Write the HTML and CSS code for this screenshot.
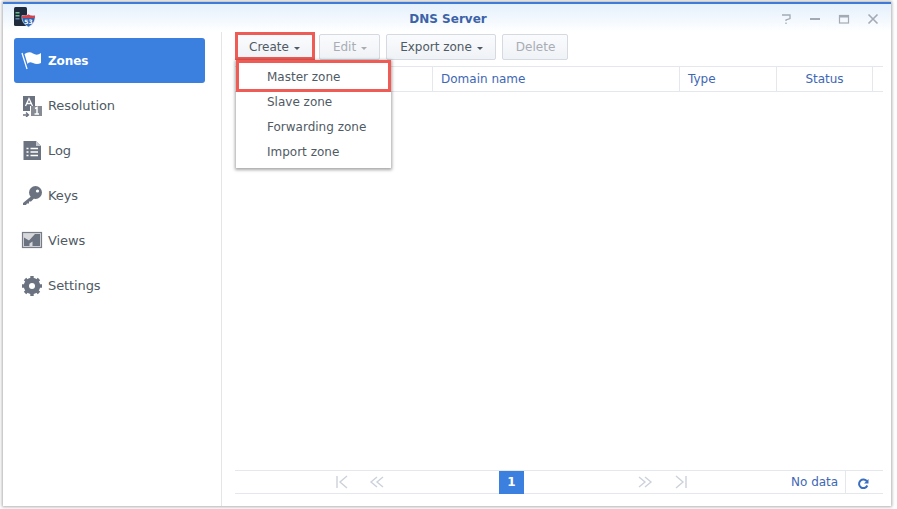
FILE: index.html
```html
<!DOCTYPE html>
<html lang="en">
<head>
<meta charset="utf-8">
<title>DNS Server</title>
<link rel="stylesheet" href="styles.css">
</head>
<body>
<div class="window">
  <header class="titlebar">
    <svg class="app-icon" width="26" height="24" viewBox="0 0 26 24">
      <rect x="1" y="1" width="13" height="19" rx="1.500" fill="#1f2a3c"/>
      <rect x="2.500" y="6" width="4" height="1.500" fill="#6fb98f"/>
      <rect x="2.500" y="9" width="4" height="1.500" fill="#6fb98f"/>
      <rect x="2.500" y="12" width="4" height="1.500" fill="#5f7fa8"/>
      <path d="M9 9.500Q13 10.500 15.500 8.500Q18 10.500 22 9.500Q23 17 15.500 21Q8 17 9 9.500Z" fill="#2f66b2" stroke="#dfe6f0" stroke-width="0.700"/>
      <path d="M9.200 9.500Q13 10.500 15.500 8.500Q18 10.500 21.800 9.500L21.800 12H9.200Z" fill="#d8424a"/>
      <text x="15.500" y="18" class="shield-text" text-anchor="middle">53</text>
    </svg>
    <h1 class="title">DNS Server</h1>
    <div class="win-controls">
      <svg width="12" height="12" viewBox="0 0 12 12"><path d="M2 2H10V5.500L6 7V8M6 9.500V11" fill="none" stroke="#a3aab4" stroke-width="1.300"/></svg>
      <svg width="12" height="12" viewBox="0 0 12 12"><path d="M1 6H11" stroke="#a3aab4" stroke-width="2"/></svg>
      <svg width="12" height="12" viewBox="0 0 12 12"><rect x="1.500" y="2.500" width="9" height="7.500" fill="none" stroke="#a3aab4" stroke-width="1.200"/><rect x="1" y="2" width="10" height="2.500" fill="#a3aab4"/></svg>
      <svg width="12" height="12" viewBox="0 0 12 12"><path d="M1.500 1.500L10.500 10.500M10.500 1.500L1.500 10.500" stroke="#a3aab4" stroke-width="1.600"/></svg>
    </div>
  </header>
  <div class="body">
    <nav class="sidebar">
      <a class="nav-item active">
        <svg class="nav-icon" width="22" height="22" viewBox="0 0 22 22"><path d="M1 3L6 19" stroke="#fff" stroke-width="1.300"/><path d="M3.500 4Q8 1 12 3.500T20 3V13Q16 15 12 13T6.500 14Z" fill="#fff"/></svg>
        <span>Zones</span>
      </a>
      <a class="nav-item">
        <svg class="nav-icon" width="22" height="22" viewBox="0 0 22 22"><path d="M2 1H14V11H9V16H2Z" fill="#6b7280"/><path d="M4.500 11L8 3.500L11.500 11M5.500 8.500H10.500" fill="none" stroke="#fff" stroke-width="1.300"/><rect x="10" y="11" width="11" height="10" fill="#868b94"/><path d="M14 13.500L16 12.500V19M13.500 19H18" fill="none" stroke="#fff" stroke-width="1.500"/><path d="M2 20H7M5 17.500L7.500 20L5 22" fill="none" stroke="#6b7280" stroke-width="1.300"/></svg>
        <span>Resolution</span>
      </a>
      <a class="nav-item">
        <svg class="nav-icon" width="22" height="22" viewBox="0 0 22 22"><path d="M2.500 1H15L20 6V20H2.500Z" fill="#6b7280"/><path d="M15 1V6H20Z" fill="#c5c8cd"/><path d="M5.500 8.500H7.500M9.500 8.500H17M5.500 12H7.500M9.500 12H17M5.500 15.500H7.500M9.500 15.500H17" stroke="#fff" stroke-width="1.700"/></svg>
        <span>Log</span>
      </a>
      <a class="nav-item">
        <svg class="nav-icon" width="22" height="22" viewBox="0 0 22 22"><circle cx="14.500" cy="7.500" r="6.500" fill="#6b7280"/><circle cx="16.500" cy="6" r="1.600" fill="#fff"/><path d="M10.500 11L2 18V20H5L6 18.500H8V16.500H10L13 13.500Z" fill="#6b7280"/></svg>
        <span>Keys</span>
      </a>
      <a class="nav-item">
        <svg class="nav-icon" width="22" height="22" viewBox="0 0 22 22"><rect x="1.500" y="2.500" width="19" height="15" fill="#d6d8dc" stroke="#777d87" stroke-width="1.200"/><path d="M3 16V7.500L8 10.500L14 4H19V16H11.500V11.500L8.500 13.500V16Z" fill="#6b7280"/></svg>
        <span>Views</span>
      </a>
      <a class="nav-item">
        <svg class="nav-icon" width="22" height="22" viewBox="0 0 22 22"><circle cx="11" cy="11" r="6" fill="none" stroke="#6b7280" stroke-width="4.500"/><path d="M11 1V21M1 11H21M4 4L18 18M18 4L4 18" stroke="#6b7280" stroke-width="3.400"/><circle cx="11" cy="11" r="3" fill="#fff"/></svg>
        <span>Settings</span>
      </a>
    </nav>
    <main class="content">
      <div class="toolbar">
        <button class="btn">Create<i class="caret"></i></button>
        <button class="btn disabled">Edit<i class="caret"></i></button>
        <button class="btn">Export zone<i class="caret"></i></button>
        <button class="btn disabled">Delete</button>
      </div>
      <div class="table-head">
        <div class="col col-blank"></div>
        <div class="col col-domain">Domain name</div>
        <div class="col col-type">Type</div>
        <div class="col col-status">Status</div>
      </div>
      <div class="table-body"></div>
      <div class="pager">
        <div class="pager-nav">
          <svg width="14" height="14" viewBox="0 0 14 14"><path d="M2 1V13M12 1L5 7L12 13" fill="none" stroke="#ccd2da" stroke-width="1.400"/></svg>
          <svg width="16" height="14" viewBox="0 0 16 14"><path d="M8 2L2 7L8 12M14 2L8 7L14 12" fill="none" stroke="#ccd2da" stroke-width="1.400"/></svg>
        </div>
        <span class="page-current">1</span>
        <div class="pager-nav right">
          <svg width="16" height="14" viewBox="0 0 16 14"><path d="M2 2L8 7L2 12M8 2L14 7L8 12" fill="none" stroke="#ccd2da" stroke-width="1.400"/></svg>
          <svg width="14" height="14" viewBox="0 0 14 14"><path d="M12 1V13M2 1L9 7L2 13" fill="none" stroke="#ccd2da" stroke-width="1.400"/></svg>
        </div>
        <span class="no-data">No data</span>
        <span class="refresh">
          <svg width="12" height="12" viewBox="0 0 12 12"><path d="M10 3.500A4.300 4.300 0 1 0 10.300 7.500" fill="none" stroke="#3a6fc0" stroke-width="2"/><path d="M11.500 1V5.500H7Z" fill="#3a6fc0"/></svg>
        </span>
      </div>
      <div class="create-mark"></div>
      <div class="menu">
        <div class="menu-item first">Master zone</div>
        <div class="menu-item">Slave zone</div>
        <div class="menu-item">Forwarding zone</div>
        <div class="menu-item">Import zone</div>
      </div>
    </main>
  </div>
</div>
</body>
</html>
```
FILE: styles.css
```css
* { box-sizing: border-box; }
html, body { margin: 0; height: 100%; }
body {
  background: #fff;
  padding: 2px 6px 3px 3px;
  font-family: "DejaVu Sans", Verdana, sans-serif;
  font-size: 12px;
  color: #505a64;
  overflow: hidden;
}
.window {
  height: 100%;
  display: flex;
  flex-direction: column;
  background: #fff;
  border-top: 2px solid #3f7bd6;
  box-shadow: 0 0 3px 1px rgba(0,0,0,.32);
}
.titlebar {
  height: 28px;
  flex: none;
  display: flex;
  align-items: center;
  position: relative;
  padding: 2px 0 0 2px;
  background: linear-gradient(#e4f0fc, #ffffff);
}
.app-icon { position: absolute; left: 10px; top: 2px; }
.shield-text { font: bold 6px "DejaVu Sans", sans-serif; fill: #fff; }
.title {
  margin: 0;
  width: 100%;
  text-align: center;
  font-size: 12px;
  font-weight: bold;
  color: #3c62a8;
}
.win-controls {
  position: absolute;
  right: 12px;
  top: 9px;
  display: flex;
  gap: 17px;
}
.body { flex: 1; display: flex; min-height: 0; }
.sidebar {
  width: 219px;
  flex: none;
  padding: 6px 16px 0 11px;
  border-right: 1px solid #e2e5ea;
}
.nav-item {
  height: 45px;
  display: flex;
  align-items: center;
  gap: 5px;
  padding-left: 7px;
  font-size: 13px;
  letter-spacing: -0.1px;
  color: #505a64;
  border-radius: 3px;
}
.nav-item.active {
  background: #3b7fdf;
  color: #fff;
  font-size: 12px;
  font-weight: bold;
}
.content {
  flex: 1;
  min-width: 0;
  position: relative;
  display: flex;
  flex-direction: column;
  padding: 1px 8px 0 13px;
}
.toolbar { display: flex; gap: 6px; height: 33px; padding: 1px 0 0; }
.btn {
  height: 26px;
  padding: 0 12px 0 13px;
  font: 12px "DejaVu Sans", Verdana, sans-serif;
  color: #505a64;
  background: linear-gradient(#fafbfd, #eff2f6);
  border: 1px solid #d5dae1;
  border-radius: 2px;
  display: flex;
  align-items: center;
}
.btn.disabled { color: #a8adb5; }
.caret {
  display: inline-block;
  margin-left: 5px;
  margin-top: 2px;
  border: 3px solid transparent;
  border-top-color: currentColor;
  border-bottom: 0;
}
.table-head {
  height: 26px;
  flex: none;
  display: flex;
  border-top: 1px solid #e4e7ec;
  border-bottom: 1px solid #e4e7ec;
  color: #3e67b5;
}
.col {
  display: flex;
  align-items: center;
  padding-left: 8px;
  border-right: 1px solid #e4e7ec;
  margin: 0;
}
.col-blank { width: 198px; }
.col-domain { width: 247px; }
.col-type { width: 97px; }
.col-status { width: 96px; justify-content: center; padding-left: 0; }
.table-body { flex: 1; }
.pager {
  height: 24px;
  flex: none;
  margin-bottom: 12px;
  display: flex;
  align-items: center;
  border-top: 1px solid #e4e7ec;
  border-bottom: 1px solid #e4e7ec;
}
.pager-nav { display: flex; align-items: center; gap: 20px; margin-left: 100px; width: 164px; }
.pager-nav.right { margin-left: 113px; width: 120px; gap: 21px; }
.page-current {
  width: 25px;
  height: 23px;
  background: #3b7fdf;
  color: #fff;
  font-weight: bold;
  display: flex;
  align-items: center;
  justify-content: center;
}
.no-data { color: #3e67b5; padding-bottom: 1px; margin-left: 34px; }
.refresh {
  margin-left: 7px;
  padding: 3px 0 0 11px;
  height: 23px;
  display: flex;
  align-items: center;
  border-left: 1px solid #e4e7ec;
}
.create-mark {
  position: absolute;
  left: 13px;
  top: 0;
  width: 80px;
  height: 28px;
  border: 3px solid #ee5c55;
}
.menu {
  position: absolute;
  left: 14px;
  top: 28px;
  width: 155px;
  height: 108px;
  background: #fff;
  box-shadow: 0 1px 3px 1px rgba(0,0,0,.35);
  padding-top: 4px;
}
.menu-item { height: 25px; padding-left: 31px; display: flex; align-items: center; }
.menu-item.first { position: relative; }
.menu-item.first::after {
  content: "";
  position: absolute;
  inset: -4px 0 -3px 0;
  border: 3px solid #ee5c55;
}
```
